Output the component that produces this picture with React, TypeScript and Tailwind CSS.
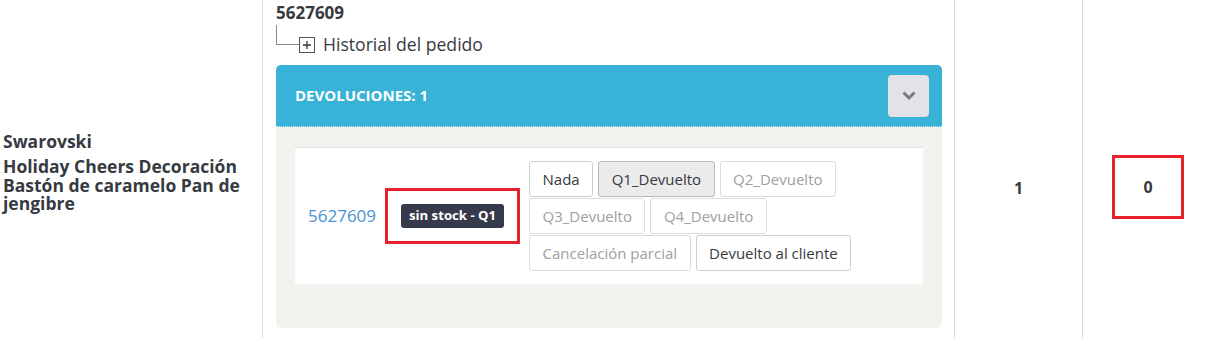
import React from "react";

const font = { fontFamily: '"Open Sans", "Noto Sans", sans-serif' };

function Btn({ label, active, disabled }: { label: string; active?: boolean; disabled?: boolean }) {
  const cls = active
    ? "bg-[#ebebeb] border-[#b8b8b8] text-[#363a41]"
    : disabled
    ? "bg-white border-[#dcdcdc] text-[#a0a0a0]"
    : "bg-white border-[#cfcfcf] text-[#363a41]";
  return (
    <div className={`h-[35.5px] px-[12.5px] flex items-center border rounded-[3px] text-[15px] whitespace-nowrap ${cls}`}>
      {label}
    </div>
  );
}

export default function App() {
  return (
    <div className="w-[1211px] h-[338px] bg-white flex overflow-hidden text-[#363a41]" style={font}>
      {/* col 1 */}
      <div className="w-[263px] shrink-0 border-r border-[#dcdcdc] pl-[3px] pr-[10px] pt-[130px]">
        <div className="text-[17.5px] font-bold leading-[22px]">Swarovski</div>
        <div className="mt-[5px] text-[17.5px] font-bold leading-[18.5px]">
          Holiday Cheers Decoración Bastón de caramelo Pan de jengibre
        </div>
      </div>
      {/* col 2 */}
      <div className="w-[692px] shrink-0 border-r border-[#dcdcdc] pl-[13px] pr-[12px] pt-[2px]">
        <div className="text-[17px] font-bold leading-[22px]">5627609</div>
        <div className="flex items-start h-[41px]">
          <div className="w-[23px] h-[20px] mt-[1px] border-l border-b border-[#8a8a8a]" />
          <div className="mt-[13px] w-[16px] h-[16px] border-[1.5px] border-[#555] flex items-center justify-center">
            <svg width="10" height="10" viewBox="0 0 10 10">
              <path d="M5 1v8M1 5h8" stroke="#333" strokeWidth="1.3" />
            </svg>
          </div>
          <div className="ml-[8px] mt-[8px] text-[17.6px] leading-[24px]">Historial del pedido</div>
        </div>
        <div className="rounded-[5px] overflow-hidden bg-[#f2f2ee]">
          <div className="h-[62px] bg-[#39b2d8] border-b border-dotted border-[#cfeaf3] flex items-center justify-between pl-[19px] pr-[13px]">
            <div className="text-white font-bold text-[15px]">DEVOLUCIONES: 1</div>
            <div className="w-[41px] h-[42px] rounded-[4px] bg-[#e2e3e8] flex items-center justify-center">
              <svg width="16" height="11" viewBox="0 0 16 11">
                <path d="M2.5 2.5l5.5 5.5 5.5-5.5" fill="none" stroke="#7a7a7a" strokeWidth="3" />
              </svg>
            </div>
          </div>
          <div className="px-[19px] pt-[20px] pb-[44px]">
            <div className="bg-white border-t border-[#e2e2e2] pl-[13px] py-[13px] flex items-center">
              <div className="text-[17px] text-[#4a93cf]">5627609</div>
              <div className="ml-[9px] w-[135px] h-[56px] border-[3px] border-[#e8202a] flex items-center justify-center">
                <div className="h-[24px] px-[8px] rounded-[3px] bg-[#363a4b] text-white text-[13.2px] font-bold flex items-center">
                  sin stock - Q1
                </div>
              </div>
              <div className="ml-[9px] w-[340px] flex flex-wrap gap-x-[5px] gap-y-[1.5px]">
                <Btn label="Nada" />
                <Btn label="Q1_Devuelto" active />
                <Btn label="Q2_Devuelto" disabled />
                <Btn label="Q3_Devuelto" disabled />
                <Btn label="Q4_Devuelto" disabled />
                <Btn label="Cancelación parcial" disabled />
                <Btn label="Devuelto al cliente" />
              </div>
            </div>
          </div>
        </div>
      </div>
      {/* col 3 */}
      <div className="w-[128px] shrink-0 border-r border-[#dcdcdc] flex justify-center pt-[176px]">
        <div className="text-[16px] font-bold leading-[24px]">1</div>
      </div>
      {/* col 4 */}
      <div className="flex-1 flex justify-center pt-[155px]">
        <div className="ml-[2px] w-[72px] h-[64px] border-[3px] border-[#e8202a] flex items-center justify-center text-[16px] font-bold">
          0
        </div>
      </div>
    </div>
  );
}
